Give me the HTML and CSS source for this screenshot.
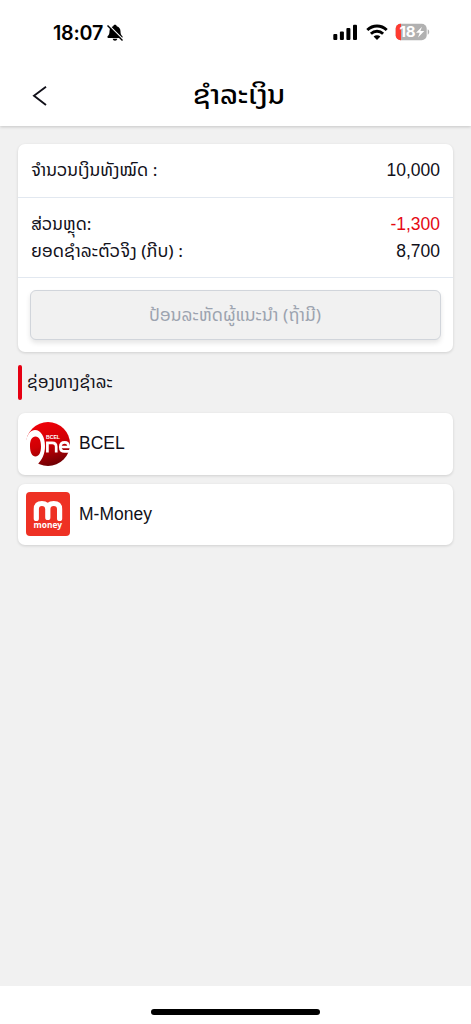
FILE: index.html
```
<!DOCTYPE html>
<html lang="lo">
<head>
<meta charset="utf-8">
<meta name="viewport" content="width=device-width">
<title>ຊຳລະເງິນ</title>
<link rel="stylesheet" href="styles.css">
</head>
<body>
<div class="screen">
  <header class="top">
    <div class="status">
      <div class="clock"><span>18:07</span>
        <svg class="bell" width="18" height="18" viewBox="0 0 18 18"><path d="M9 .8c-1 0-1.700.6-1.800 1.500C4.700 3.100 3.500 5 3.500 7.300c0 2.600-.6 3.700-1.700 4.700-.7.700-.4 1.900.5 1.900h13.400c.9 0 1.200-1.200.5-1.900-1.100-1-1.700-2.100-1.700-4.700 0-2.300-1.200-4.200-3.700-5C10.700 1.400 10 .8 9 .8zM6.700 14.800h4.600c-.2 1.200-1.100 2-2.300 2s-2.100-.8-2.300-2z"/><path d="M2.600.9 17.100 15.400" stroke="#fff" stroke-width="1.400"/><path d="M1.500 1.600 16.500 16.600" stroke="#000" stroke-width="1.400"/></svg>
      </div>
      <div class="indicators">
        <svg width="25" height="17" viewBox="0 0 25 17"><rect x=".3" y="10" width="4" height="6" rx="1"/><rect x="6.900" y="7.400" width="4" height="8.600" rx="1"/><rect x="13.400" y="4" width="4" height="12" rx="1"/><rect x="20" y=".7" width="4" height="15.300" rx="1"/></svg>
        <svg class="wifi" width="22" height="17" viewBox="0 0 22 17"><g fill="none" stroke="#000" stroke-width="2.900"><path d="M1.300 6C6.800.6 15.200.6 20.700 6"/><path d="M4.900 9.700C8.400 6.500 13.600 6.500 17.100 9.700"/></g><path d="M11 16 7.600 12.600c1.900-1.700 4.900-1.700 6.800 0z"/></svg>
        <svg class="battery" width="36" height="18" viewBox="0 0 36 18"><defs><clipPath id="level"><rect width="6" height="18"/></clipPath></defs><rect x=".7" y=".7" width="31" height="16.600" rx="5" fill="#b1b1b1"/><rect x=".7" y=".7" width="31" height="16.600" rx="5" fill="#ff3b30" clip-path="url(#level)"/><path d="M32.700 6.300c2 .7 2 4.700 0 5.400z" fill="#b1b1b1"/><text x="4.600" y="14.400" class="charge" textLength="16">18</text><path d="M27 3.700 21 9.800h3.700L23 14.500l6.300-6.400h-3.900z" fill="#fff"/></svg>
      </div>
    </div>
    <div class="nav">
      <svg class="back" width="16" height="22" viewBox="0 0 16 22"><path d="M14 1.800 2 10.800 14 20" fill="none" stroke="#111019" stroke-width="1.900"/></svg>
      <h1 class="title"><svg width="91" height="40"><text x="-1" y="28" textLength="92" lengthAdjust="spacingAndGlyphs">ຊຳລະເງິນ</text></svg></h1>
    </div>
  </header>
  <main class="content">
    <section class="card summary">
      <div class="row total">
        <svg class="lao" width="128" height="27"><text x="0" y="19" textLength="126.500" lengthAdjust="spacingAndGlyphs">ຈຳນວນເງິນທັງໝົດ :</text></svg>
        <span>10,000</span>
      </div>
      <div class="amounts">
        <div class="row">
          <svg class="lao" width="62" height="27"><text x="0" y="19" textLength="60.500" lengthAdjust="spacingAndGlyphs">ສ່ວນຫຼຸດ:</text></svg>
          <span class="discount">-1,300</span>
        </div>
        <div class="row">
          <svg class="lao" width="154" height="27"><text x="0" y="18.500" textLength="152" lengthAdjust="spacingAndGlyphs">ຍອດຊຳລະຕົວຈິງ (ກີບ) :</text></svg>
          <span>8,700</span>
        </div>
      </div>
      <div class="referral">
        <button class="code" type="button"><svg class="lao" width="172" height="30"><text x="-1" y="21" textLength="172" lengthAdjust="spacingAndGlyphs">ປ້ອນລະຫັດຜູ້ແນະນຳ (ຖ້າມີ)</text></svg></button>
      </div>
    </section>
    <h2 class="section"><svg class="lao" width="88" height="27"><text x="0" y="19" textLength="86" lengthAdjust="spacingAndGlyphs">ຊ່ອງທາງຊຳລະ</text></svg></h2>
    <div class="card method">
      <svg width="44" height="44" viewBox="0 0 44 44"><defs><linearGradient id="ball" x1=".35" y1="0" x2=".65" y2="1"><stop offset="0" stop-color="#f00008"/><stop offset=".5" stop-color="#d00005"/><stop offset="1" stop-color="#680003"/></linearGradient></defs><circle cx="22" cy="22" r="22" fill="url(#ball)"/><path fill="#fff" fill-rule="evenodd" d="M-1 22C1 13 4 8 9 8c6 0 10 7 10 16 0 8-3 14-8 19H0zM4 24c0 6.500 2.200 10.500 5.500 10.500S15 31 15 24.500s-2-10-5.500-10S4 18 4 24z"/><path fill="none" stroke="#fff" stroke-width="2.700" d="M21.400 30.500V20.800h4.800q4 0 4 4v5.700M43 29.400h-4.500q-4.200 0-4.200-4.500 0-4.500 4.400-4.500 4 0 4 4.600h-8"/><text class="bcel" x="20" y="17" textLength="14" lengthAdjust="spacingAndGlyphs">BCEL</text></svg>
      <span>BCEL</span>
    </div>
    <div class="card method">
      <svg width="44" height="44" viewBox="0 0 44 44"><rect width="44" height="44" rx="4" fill="#ee3124"/><path d="M10.300 26.500V17q0-5.500 5.600-5.500t5.900 5.500v8.500V17q0-5.500 5.900-5.500t5.900 5.500v9.500" fill="none" stroke="#fff" stroke-width="5.200" stroke-linecap="round" stroke-linejoin="round"/><text class="money" x="7.600" y="36" textLength="28.500" lengthAdjust="spacingAndGlyphs">money</text></svg>
      <span>M-Money</span>
    </div>
  </main>
  <footer class="bottom"><div class="home"></div></footer>
</div>
</body>
</html>
```
FILE: styles.css
```
* { box-sizing: border-box; }
body { margin: 0; background: #f1f1f1; color: #111019; font-family: "Liberation Sans", "DejaVu Sans", sans-serif; font-size: 17.500px; }
svg { display: block; flex: none; }
.screen { height: 1024px; display: flex; flex-direction: column; }
.top { height: 126px; background: #fff; box-shadow: 0 1px 3px rgba(0,0,0,.18); }
.status { height: 64px; display: flex; justify-content: space-between; padding: 22px 40px 0 53px; }
.clock { display: flex; height: 22px; align-items: center; gap: 3px; color: #000; font: 600 19.700px/22px Inter, sans-serif; letter-spacing: -.2px; }
.indicators { display: flex; align-items: center; height: 20px; }
.wifi { margin-left: 8px; }
.battery { margin-left: 7px; }
.charge { font: 700 15px Inter, sans-serif; fill: #fff; }
.nav { height: 62px; display: grid; grid-template-columns: 1fr 91px 1fr; align-items: center; padding: 1px 25px 0 32px; }
.title { grid-column: 2; margin: 0; color: #000; font: 500 26px "Noto Sans Lao", "DejaVu Sans", sans-serif; }
.title svg, .lao { overflow: visible; }
.lao { font: 17px "Noto Sans Lao", "DejaVu Sans", sans-serif; fill: currentColor; }
.content { flex: 1; padding: 18px; }
.card { background: #fff; border-radius: 7px; box-shadow: 0 1px 3px rgba(0,0,0,.14); }
.summary { height: 207.500px; }
.row { display: flex; justify-content: space-between; align-items: center; height: 27px; padding: 0 13px; }
.total { height: 54px; border-bottom: 1px solid #e2e8f0; }
.amounts { height: 80px; padding-top: 13px; border-bottom: 1px solid #e2e8f0; }
.discount { color: #e50914; }
.referral { padding: 12px; }
.code { width: 100%; height: 50px; display: flex; justify-content: center; align-items: center; padding: 0; border: 1px solid #d1d5db; border-radius: 6px; background: #f1f1f1; color: #9ca3af; box-shadow: 0 3px 5px rgba(0,0,0,.1); }
.section { height: 35px; display: flex; align-items: center; margin: 13.500px 0 13px; font-weight: 400; }
.section::before { content: ""; width: 4px; height: 35px; margin-right: 5px; border-radius: 2px; background: #e60012; }
.method { height: 61.500px; display: flex; align-items: center; gap: 9px; padding: 0 8px; }
.method + .method { margin-top: 9px; }
.bcel { font: 700 5px "Liberation Sans", sans-serif; fill: #fff; }
.money { font: 700 9px "Open Sans", sans-serif; fill: #fff; }
.bottom { height: 38px; display: flex; justify-content: center; padding-top: 23px; background: #fff; }
.home { width: 169px; height: 6px; border-radius: 3px; background: #000; }
```
